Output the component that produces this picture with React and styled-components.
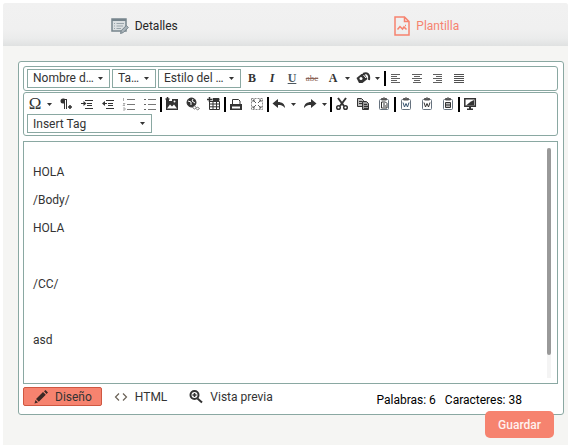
import React from "react";
import styled, { createGlobalStyle, css } from "styled-components";

const line = "#8aa8a2";
const coral = "#f6836f";
const ink = "#333333";

const GlobalStyle = createGlobalStyle`
  *, *::before, *::after { box-sizing: border-box; }
  body {
    margin: 0;
    background: #ffffff;
    color: ${ink};
    font: 12px/16px Roboto, "Liberation Sans", sans-serif;
  }
  button, select { font: inherit; color: inherit; margin: 0; }
`;

const Page = styled.main`
  display: flex;
  flex-direction: column;
  min-height: calc(100vh - 3px);
  margin: 3px 2px 0 3px;
  background: #f5f5f3;
  border-radius: 3px 3px 0 0;
`;

const TabBar = styled.nav`
  display: grid;
  grid-template-columns: 1fr 1fr;
  height: 43px;
  border-radius: 3px 3px 0 0;
  background: linear-gradient(#f1f1f1 0%, #f0f0f0 60%, #ebecec 82%, #dfe1e1 100%);
`;

const Tab = styled.button`
  display: flex;
  align-items: center;
  justify-content: center;
  gap: 6px;
  border: 0;
  padding: 2px 0 0;
  background: none;
  color: ${(p) => (p.$active ? coral : "#262626")};
`;

const Editor = styled.section`
  display: flex;
  flex-direction: column;
  margin: 15px 4px 0 15px;
  padding: 4px 5px 6px 4px;
  border: 1px solid ${line};
  border-radius: 3px;
  background: #ffffff;
`;

const Toolbar = styled.div`
  display: flex;
  flex-wrap: wrap;
  align-items: center;
  padding: 1px 2px 2px ${(p) => p.$indent}px;
  margin-bottom: ${(p) => p.$space}px;
  border: 1px solid ${line};
  border-radius: 3px;
`;

const Selects = styled.div`
  display: flex;
  gap: 2px;
`;

const SelectBox = styled.label`
  display: grid;
  align-items: center;
  width: ${(p) => p.$width}px;
  margin-left: ${(p) => (p.$inset ? 2 : 0)}px;
  > * { grid-area: 1 / 1; }
  > svg { justify-self: end; margin-right: 7px; pointer-events: none; }
`;

const Select = styled.select`
  appearance: none;
  width: 100%;
  height: 19px;
  padding: 0 0 0 5px;
  border: 1px solid ${line};
  border-radius: 0;
  background: #ffffff;
  line-height: 16px;
`;

const Group = styled.div`
  display: flex;
  align-items: center;
  gap: ${(p) => (p.$tight ? 0 : 1)}px;
  padding: ${(p) => (p.$tight ? "0 1px 0 2px" : "0")};
  height: 20px;
`;

const Separator = styled.span`
  width: 2px;
  height: 15px;
  background: #000000;
`;

const Tool = styled.button`
  display: flex;
  align-items: center;
  width: ${(p) => (p.$menu ? 30 : 20)}px;
  height: 20px;
  padding: 0 0 0 2px;
  border: 0;
  background: none;
  > svg:first-child { margin-right: 4px; flex: none; }
`;

const Glyph = styled.span`
  width: 16px;
  margin-right: 4px;
  text-align: center;
  font: ${(p) => p.$face} "Liberation Serif", serif;
  text-decoration: ${(p) => p.$line || "none"};
  color: ${(p) => p.$color || ink};
`;

const Break = styled.span`
  flex-basis: 100%;
`;

const Canvas = styled.div`
  display: flex;
  justify-content: space-between;
  height: 243px;
  padding: 6px 6px 5px 9px;
  border: 1px solid ${line};
`;

const Copy = styled.div`
  padding-top: 10px;
  line-height: 28px;
  p { margin: 0; min-height: 28px; }
`;

const Track = styled.div`
  width: 4px;
  background: #f4f4f4;
`;

const Thumb = styled.div`
  height: 90%;
  border-radius: 2px;
  background: #999999;
`;

const Footer = styled.footer`
  display: flex;
  align-items: flex-start;
  margin-top: 3px;
`;

const Mode = styled.button`
  display: flex;
  align-items: center;
  gap: 6px;
  height: 19px;
  padding: 0 9px;
  border: 1px solid transparent;
  border-radius: 2px;
  background: none;
  ${(p) =>
    p.$active &&
    css`
      background: ${coral};
      border-color: #cf5741;
    `}
`;

const Modes = styled.div`
  display: flex;
  gap: 1px;
`;

const Counts = styled.div`
  display: flex;
  gap: 9px;
  margin: 5px 36px 0 auto;
  color: #000000;
`;

const Save = styled.button`
  align-self: flex-end;
  margin: -4px 14px 7px 0;
  height: 27px;
  padding: 0 13px;
  border: 0;
  border-radius: 5px;
  background: ${coral};
  color: #fff1ee;
  font-weight: 500;
`;

const Svg = ({ size = 16, box = 16, children, ...rest }) => (
  <svg width={size} height={size} viewBox={`0 0 ${box} ${box}`} fill="none" stroke={ink} aria-hidden="true" {...rest}>
    {children}
  </svg>
);

const Caret = () => (
  <svg width="5" height="3" viewBox="0 0 5 3" aria-hidden="true">
    <path d="M0 0h5L2.5 3z" fill={ink} />
  </svg>
);

const Clipboard = ({ children }) => (
  <>
    <rect x="3.5" y="3.5" width="9" height="10" rx="1" stroke="#66727e" />
    <path d="M5.5 4V2.5h1.5L8 1.5l1 1h1.5V4z" fill="#555" stroke="#555" />
    {children}
  </>
);

const drawings = {
  fill: (
    <>
      <path d="M1.500 8L6.500 4h3l3 5-5 4H4z" fill={ink} stroke="none" />
      <path d="M8 4c4-2 7 0 6 6" strokeWidth="2" />
      <circle cx="6" cy="8.500" r="1.500" fill="#fff" stroke="none" />
      <path d="M8.500 5l2.500 3" stroke="#fff" />
    </>
  ),
  left: <path d="M3 4.500h9M3 6.500h6M3 8.500h9M3 10.500h6M3 12.500h9" stroke="#606060" />,
  center: <path d="M3 4.500h10M5 6.500h6M3 8.500h10M5 10.500h6M4 12.500h8" stroke="#606060" />,
  right: <path d="M3 4.500h9M6 6.500h6M3 8.500h9M6 10.500h6M3 12.500h9" stroke="#606060" />,
  justify: <path d="M3 4.500h10M3 6.500h10M3 8.500h10M3 10.500h10M3 12.500h10" stroke="#505050" />,
  paragraph: (
    <>
      <path d="M7 2.500H5a2.500 2.500 0 0 0 0 5h1V3" fill={ink} stroke="none" />
      <path d="M6.500 3v10M8.500 3v10M5 3.500h4" />
      <path d="M10 11h4M12 9v4" strokeWidth="1.500" />
    </>
  ),
  indent: (
    <>
      <path d="M2 7.500h4M6 4.500h8M8 7.500h5M8 9.500h5M6 12.500h8" />
      <path d="M4.500 5l3 2.500-3 2.500z" fill={ink} stroke="none" />
    </>
  ),
  outdent: (
    <>
      <path d="M3 7.500h4M6 4.500h8M8 7.500h5M8 9.500h5M6 12.500h8" />
      <path d="M5 5L2 7.500 5 10z" fill={ink} stroke="none" />
    </>
  ),
  ordered: (
    <>
      <path d="M6 3.500h8M6 8.500h8M6 13.500h8" stroke="#777" />
      <path d="M2.500 2v3M2 7.500h2L2 9.500h2M2 12h2v2H2" stroke="#aaa" />
    </>
  ),
  bullets: (
    <>
      <path d="M6 3.500h8M6 8.500h8M6 13.500h8" stroke="#777" />
      <path d="M2 3.500h2M2 8.500h2M2 13.500h2" stroke="#666" />
    </>
  ),
  image: (
    <>
      <path d="M2 3h3v2h3V3h6v11H2z" fill={ink} stroke="none" />
      <path d="M3.500 1v4M1.500 3h4" strokeWidth="1.500" />
      <path d="M3 12.500l3-4 2 2 2-2 3 4z" fill="#fff" stroke="none" />
      <circle cx="10.500" cy="5.500" r="1" fill="#fff" stroke="none" />
    </>
  ),
  link: (
    <>
      <circle cx="6.500" cy="6.500" r="4.500" fill={ink} />
      <path d="M3 5l3 1v3M8 3l-1 2 3 2" stroke="#fff" />
      <path d="M7.500 11.500l2-1.500 2 1.500-2 1.500zM11 12.500l1.500-1.500 2 1.500-2 1.500z" fill="#fff" stroke="#777" />
    </>
  ),
  table: (
    <>
      <path d="M3.500 5.500h10v8h-10zM3.500 8h10M3.500 10.800h10M7 5v8.500M10.500 5v8.500" />
      <path d="M7 2.500h6v2H7z" fill={ink} />
      <path d="M1 3.500h5M3.500 1v5" strokeWidth="1.500" />
    </>
  ),
  print: (
    <>
      <path d="M4.500 8V3.500h6l1.500 1.500v3" />
      <path d="M2 8h12v6H2z" fill={ink} stroke="none" />
      <path d="M4 11.500h8" stroke="#fff" strokeWidth="2" />
    </>
  ),
  expand: (
    <g stroke="#606060">
      <path d="M2.500 2.500h11v11h-11z" strokeDasharray="2 1" stroke="#888" />
      <path d="M4 4l3 3M12 4L9 7M4 12l3-3M12 12L9 9M4 6V4h2M10 4h2v2M4 10v2h2M10 12h2v-2" />
    </g>
  ),
  undo: <path d="M1.500 7.500L7 3v3c4 0 7 2 7 6C12 9.500 10 9 7 9v3z" fill={ink} stroke="none" />,
  redo: <path d="M14.500 7.500L9 3v3c-4 0-7 2-7 6C4 9.500 6 9 9 9v3z" fill={ink} stroke="none" />,
  cut: (
    <>
      <path d="M4 2l6 8M12 2L6 10" strokeWidth="2" />
      <circle cx="4.500" cy="11.500" r="1.800" strokeWidth="1.500" />
      <circle cx="11.500" cy="11.500" r="1.800" strokeWidth="1.500" />
    </>
  ),
  copy: (
    <>
      <path d="M2.500 2.500h4l2 2v6h-6z" fill="#bbb" />
      <path d="M4 5.500h3M4 7.500h3" />
      <path d="M7.500 5.500h4l2 2v6h-6z" fill="#999" />
      <path d="M9 8.500h3M9 10.500h4M9 12.500h4" />
    </>
  ),
  paste: <Clipboard><path d="M5.500 6h4l1.500 1.500V12H5.500zM7 8h2M7 10h3" /></Clipboard>,
  pasteWord: <Clipboard><path d="M5 6.500L6.500 11 8 7.500 9.500 11 11 6.500" stroke="#36536e" /></Clipboard>,
  pasteWordClean: <Clipboard><path d="M5 6.500L6.500 11 8 7.500 9.500 11 11 6.500" /></Clipboard>,
  pasteText: <Clipboard><path d="M5.500 6.500h5v5h-5zM6 9h4" fill="#bbb" /></Clipboard>,
  monitor: (
    <>
      <path d="M2.800 2.800h10.500v7.500H2.800z" strokeWidth="1.500" />
      <path d="M4 9.500h8V4L9 5.500 7 7z" fill={ink} stroke="none" />
      <path d="M7 11h2v1.500h2V14H5v-1.500h2z" fill={ink} stroke="none" />
    </>
  ),
};

const IconTool = ({ name, label, menu }) => (
  <Tool type="button" aria-label={label} $menu={menu}>
    <Svg>{drawings[name]}</Svg>
    {menu && <Caret />}
  </Tool>
);

const TextTool = ({ label, children, menu, ...glyph }) => (
  <Tool type="button" aria-label={label} $menu={menu}>
    <Glyph {...glyph}>{children}</Glyph>
    {menu && <Caret />}
  </Tool>
);

const DropDown = ({ label, text, width, inset }) => (
  <SelectBox $width={width} $inset={inset}>
    <Select aria-label={label}>
      <option>{text}</option>
    </Select>
    <Caret />
  </SelectBox>
);

export default function App() {
  return (
    <>
      <GlobalStyle />
      <Page>
        <TabBar>
          <Tab type="button">
            <Svg size={18} box={18} stroke="#77858d">
              <path d="M1 2h14v12H1z" fill="#dce0e2" strokeWidth="1.500" />
              <path d="M1 3h14" strokeWidth="2" />
              <path d="M3 6.500h1M5.500 6.500H13M3 9h1M5.500 9H12M3 11.500h1M5.500 11.500H10" stroke="#9aa5ab" />
              <path d="M9.500 16.500l.8-3 5-5 2 2-5 5z" fill="#a9b3b9" />
            </Svg>
            Detalles
          </Tab>
          <Tab type="button" $active>
            <svg width="16" height="20" viewBox="0 0 16 20" fill="none" stroke={coral} strokeWidth="1.500" aria-hidden="true">
              <path d="M1 1h9.500L15 5.500V19H1zM10.500 1v4.500H15" />
              <path d="M3.500 13.500l2.500-3 2.500 2.500 1.500-2 2.500 2.500M11 9.500h1" />
            </svg>
            Plantilla
          </Tab>
        </TabBar>
        <Editor>
          <Toolbar $indent={3} $space={1}>
            <Selects>
              <DropDown label="Nombre de fuente" text="Nombre d…" width={83} />
              <DropDown label="Tamaño" text="Ta…" width={44} />
              <DropDown label="Estilo del párrafo" text="Estilo del …" width={83} />
            </Selects>
            <Group $tight>
              <TextTool label="Negrita" $face="bold 12px/14px">B</TextTool>
              <TextTool label="Cursiva" $face="italic bold 12px/14px">I</TextTool>
              <TextTool label="Subrayado" $face="bold 12px/14px" $line="underline" $color="#4d5860">U</TextTool>
              <TextTool label="Tachado" $face="9px/14px" $line="line-through" $color="#8d6558">abc</TextTool>
              <TextTool label="Color de texto" $face="bold 12px/14px" menu>A</TextTool>
              <IconTool label="Color de fondo" name="fill" menu />
            </Group>
            <Separator />
            <Group>
              <IconTool label="Alinear a la izquierda" name="left" />
              <IconTool label="Centrar" name="center" />
              <IconTool label="Alinear a la derecha" name="right" />
              <IconTool label="Justificar" name="justify" />
            </Group>
          </Toolbar>
          <Toolbar $indent={1} $space={5}>
            <Group>
              <TextTool label="Símbolo" $face="17px/18px" menu>Ω</TextTool>
              <IconTool label="Párrafo" name="paragraph" />
              <IconTool label="Aumentar sangría" name="indent" />
              <IconTool label="Reducir sangría" name="outdent" />
              <IconTool label="Lista numerada" name="ordered" />
              <IconTool label="Lista con viñetas" name="bullets" />
            </Group>
            <Separator />
            <Group>
              <IconTool label="Imagen" name="image" />
              <IconTool label="Enlace" name="link" />
              <IconTool label="Tabla" name="table" />
            </Group>
            <Separator />
            <Group>
              <IconTool label="Imprimir" name="print" />
              <IconTool label="Pantalla completa" name="expand" />
            </Group>
            <Separator />
            <Group>
              <IconTool label="Deshacer" name="undo" menu />
              <IconTool label="Rehacer" name="redo" menu />
            </Group>
            <Separator />
            <Group>
              <IconTool label="Cortar" name="cut" />
              <IconTool label="Copiar" name="copy" />
              <IconTool label="Pegar" name="paste" />
            </Group>
            <Separator />
            <Group>
              <IconTool label="Pegar de Word" name="pasteWord" />
              <IconTool label="Pegar de Word sin formato" name="pasteWordClean" />
              <IconTool label="Pegar texto" name="pasteText" />
            </Group>
            <Separator />
            <Group>
              <IconTool label="Pantalla" name="monitor" />
            </Group>
            <Break />
            <DropDown label="Insert Tag" text="Insert Tag" width={125} inset />
          </Toolbar>
          <Canvas>
            <Copy>
              <p>HOLA</p>
              <p>/Body/</p>
              <p>HOLA</p>
              <p />
              <p>/CC/</p>
              <p />
              <p>asd</p>
            </Copy>
            <Track>
              <Thumb />
            </Track>
          </Canvas>
          <Footer>
            <Modes>
              <Mode type="button" $active>
                <Svg>
                  <path d="M1.500 14.500l1-3.500 2.500 2.500zM3 10l7-7 2.800 2.800-7 7zM11 2.200L12.500 1l2.500 2.500-1.500 1.500z" fill="#3b2925" stroke="none" />
                </Svg>
                Diseño
              </Mode>
              <Mode type="button">
                <Svg><path d="M6 4.500L2.500 8 6 11.500M10 4.500L13.500 8 10 11.500" stroke="#6b6257" strokeWidth="1.200" /></Svg>
                HTML
              </Mode>
              <Mode type="button">
                <Svg>
                  <circle cx="6.500" cy="6" r="4" strokeWidth="2" />
                  <path d="M6.500 4v4M4.500 6h4" strokeWidth="1.500" />
                  <path d="M9.500 9.500l4.500 4" strokeWidth="2" />
                </Svg>
                Vista previa
              </Mode>
            </Modes>
            <Counts>
              <span>Palabras: 6</span>
              <span>Caracteres: 38</span>
            </Counts>
          </Footer>
        </Editor>
        <Save type="button">Guardar</Save>
      </Page>
    </>
  );
}
